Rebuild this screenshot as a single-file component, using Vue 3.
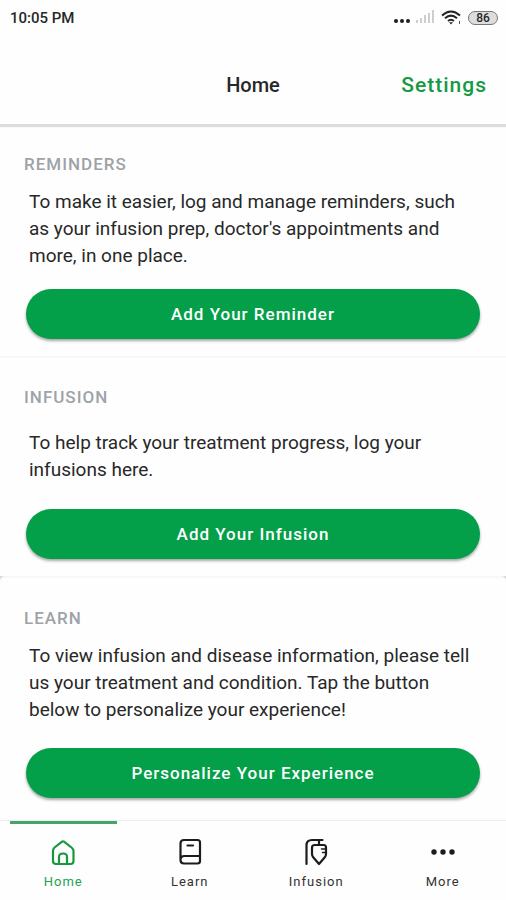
<template>
  <div class="app">
    <div class="status-bar">
      <span class="time">10:05 PM</span>
      <div class="status-icons">
        <svg width="68" height="20" viewBox="0 0 68 20">
          <g fill="#1c1c1c">
            <circle cx="2" cy="13" r="2" />
            <circle cx="8" cy="13" r="2" />
            <circle cx="14" cy="13" r="2" />
          </g>
          <g fill="#cecece">
            <rect x="22" y="12" width="2" height="3" />
            <rect x="26" y="10" width="2" height="5" />
            <rect x="30" y="7" width="2" height="8" />
            <rect x="34" y="5" width="2" height="10" />
            <rect x="38" y="2" width="2" height="13" />
          </g>
          <g fill="none" stroke="#242424" stroke-width="2">
            <path d="M48 7.500Q57 -0.500 66 7.500" />
            <path d="M51 10.300Q57 5 63 10.300" />
            <path d="M54 13Q57 10.400 60 13" />
          </g>
          <path d="M55 14.200H59L57 16.500Z" fill="#242424" />
          <rect x="65" y="13" width="1" height="3" fill="#555" />
        </svg>
        <span class="battery">86</span>
      </div>
    </div>

    <header class="header">
      <h1>Home</h1>
      <a href="#" class="settings">Settings</a>
    </header>

    <main>
      <section v-for="card in cards" :key="card.title" class="card" :class="card.name">
        <h2>{{ card.title }}</h2>
        <p>{{ card.text }}</p>
        <button type="button" class="action">{{ card.button }}</button>
      </section>
    </main>

    <nav class="tabs">
      <a
        v-for="tab in tabs"
        :key="tab"
        href="#"
        class="tab"
        :class="{ active: tab === activeTab }"
        @click.prevent="activeTab = tab"
      >
        <svg v-if="tab === 'Home'" width="28" height="28" viewBox="0 0 28 28">
          <path d="M5.500 9.500L13 3.700Q14 3 15 3.700L22.500 9.500Q24.500 11 24.500 13V23Q24.500 26 21.500 26H7Q4 26 4 23V13Q4 11 5.500 9.500Z" />
          <path d="M10 25.500V19Q10 15.500 14 15.500Q18 15.500 18 19V25.500" />
        </svg>
        <svg v-else-if="tab === 'Learn'" width="28" height="28" viewBox="0 0 28 28">
          <path d="M4.500 22V5.500Q4.500 2 8 2H21.500Q24 2 24 4.500V23Q24 25.500 21.500 25.500H8Q4.500 25.500 4.500 22Q4.500 18 8.500 18H24" />
          <path d="M11.500 7.500H17" />
        </svg>
        <svg v-else-if="tab === 'Infusion'" width="28" height="28" viewBox="0 0 28 28">
          <path d="M4.500 26V7.500Q4.500 2 10 2H20.500M17 2V7" />
          <path d="M13 7H21.500Q24 7 24 9.500V16Q24 17.500 23 19L17 26L11 19Q10 17.500 10 16V9.500Q10 7 13 7Z" />
          <path d="M19.500 11H23M20.500 14.500H23" stroke-width="1.500" />
        </svg>
        <svg v-else width="28" height="28" viewBox="0 0 28 28" class="dots">
          <circle cx="5" cy="14" r="2.700" />
          <circle cx="14" cy="14" r="2.700" />
          <circle cx="23" cy="14" r="2.700" />
        </svg>
        <span>{{ tab }}</span>
      </a>
    </nav>
  </div>
</template>

<script setup>
import { ref } from 'vue'

const cards = [
  {
    name: 'reminders',
    title: 'REMINDERS',
    text: "To make it easier, log and manage reminders, such as your infusion prep, doctor's appointments and more, in one place.",
    button: 'Add Your Reminder',
  },
  {
    name: 'infusion',
    title: 'INFUSION',
    text: 'To help track your treatment progress, log your infusions here.',
    button: 'Add Your Infusion',
  },
  {
    name: 'learn',
    title: 'LEARN',
    text: 'To view infusion and disease information, please tell us your treatment and condition. Tap the button below to personalize your experience!',
    button: 'Personalize Your Experience',
  },
]

const tabs = ['Home', 'Learn', 'Infusion', 'More']
const activeTab = ref('Home')
</script>

<style>
body {
  margin: 0;
  background: #fefefe;
}
</style>

<style scoped>
.app {
  display: flex;
  flex-direction: column;
  min-height: 100vh;
  background: #fefefe;
  color: #282828;
  font-family: Roboto, sans-serif;
}

.status-bar {
  display: flex;
  align-items: center;
  justify-content: space-between;
  height: 36px;
  padding: 0 8px 0 10px;
}

.time {
  font-size: 15px;
  font-weight: 500;
}

.status-icons {
  display: flex;
  align-items: center;
  gap: 6px;
}

.battery {
  box-sizing: border-box;
  width: 30px;
  height: 14px;
  border: 1px solid #777;
  border-radius: 7px;
  background: #ddd;
  font-size: 12px;
  font-weight: 500;
  line-height: 12px;
  text-align: center;
}

.header {
  position: relative;
  display: grid;
  grid-template-columns: 1fr auto 1fr;
  align-items: center;
  height: 88px;
  padding: 9px 19px 0;
  box-sizing: border-box;
  box-shadow: 0 3px 1px #ddd;
}

.header h1 {
  grid-column: 2;
  margin: 0;
  font-size: 20px;
  font-weight: 500;
}

.settings {
  justify-self: end;
  color: #149a43;
  font-size: 21px;
  font-weight: 500;
  letter-spacing: 1px;
  text-decoration: none;
}

/* shows through at the rounded corners of the last card */
main {
  background: #d8d8d8;
}

.card {
  padding: 28px 24px 17px;
  background: #fefefe;
}

.card h2 {
  margin: 0;
  color: #9da3a7;
  font-size: 17px;
  font-weight: 500;
  line-height: 24px;
  letter-spacing: 1px;
}

.card p {
  margin: 12px 0 20px;
  padding: 0 5px;
  font-size: 19px;
  line-height: 27px;
}

.infusion {
  padding-top: 27px;
  border-top: 2px solid #f8f8f8;
}

.card.infusion p {
  margin: 20px 0 26px;
}

.learn {
  padding-bottom: 22px;
  border-top: 2px solid #f8f8f8;
  border-radius: 5px 5px 0 0;
}

.card.learn p {
  margin-bottom: 25px;
}

.action {
  display: block;
  width: calc(100% - 4px);
  height: 50px;
  margin: 0 auto;
  border: 0;
  border-radius: 25px;
  background: #039f49;
  box-shadow: 0 2px 3px rgba(0, 0, 0, 0.35);
  color: #fff;
  font-family: inherit;
  font-size: 17px;
  font-weight: 500;
  letter-spacing: 1px;
  cursor: pointer;
}

.tabs {
  position: relative;
  display: flex;
  margin-top: auto;
  box-shadow: 0 -1px 1px #eee;
}

.tab {
  display: flex;
  flex: 1;
  flex-direction: column;
  align-items: center;
  gap: 8px;
  padding: 14px 0 10px;
  margin: 0 10px;
  border-top: 3px solid transparent;
  color: #333;
  font-size: 13px;
  line-height: 16px;
  letter-spacing: 1px;
  text-decoration: none;
}

.tab svg {
  fill: none;
  stroke: #1c1c1c;
  stroke-width: 2.2;
  stroke-linecap: round;
  stroke-linejoin: round;
}

.tab .dots {
  fill: #1c1c1c;
  stroke: none;
}

.active {
  border-top-color: #46a66a;
  color: #24a058;
}

.tab.active svg {
  stroke: #17983c;
}

.tab.active .dots {
  fill: #17983c;
  stroke: none;
}
</style>
